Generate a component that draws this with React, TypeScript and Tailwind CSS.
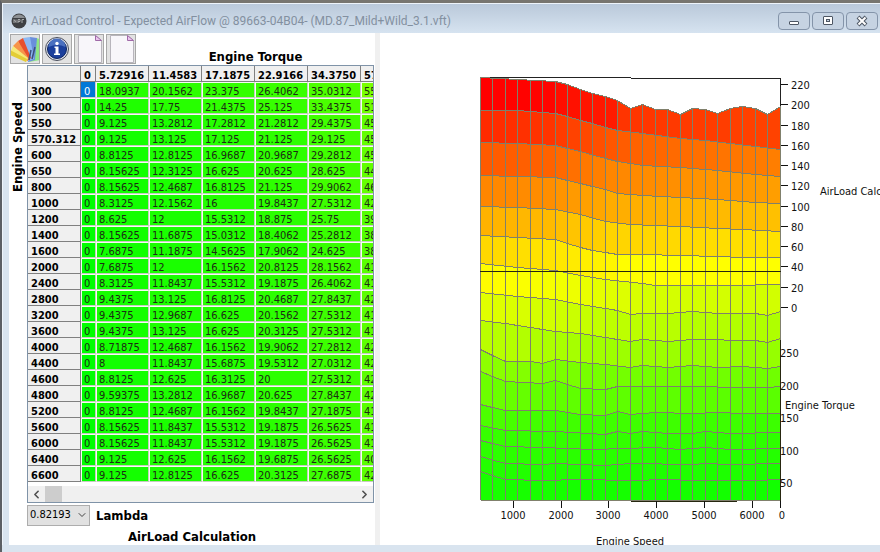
import { ChevronDown, ChevronLeft, ChevronRight } from "lucide-react";

const TORQUE = ["0", "5.72916", "11.4583", "17.1875", "22.9166", "34.3750", "57"];

const ROWS: string[][] = [
  ["300", "0", "18.0937", "20.1562", "23.375", "26.4062", "35.0312", "55"],
  ["500", "0", "14.25", "17.75", "21.4375", "25.125", "33.4375", "51"],
  ["550", "0", "9.125", "13.2812", "17.2812", "21.2812", "29.4375", "45"],
  ["570.312", "0", "9.125", "13.125", "17.125", "21.125", "29.125", "45"],
  ["600", "0", "8.8125", "12.8125", "16.9687", "20.9687", "29.2812", "45"],
  ["650", "0", "8.15625", "12.3125", "16.625", "20.625", "28.625", "44"],
  ["800", "0", "8.15625", "12.4687", "16.8125", "21.125", "29.9062", "46"],
  ["1000", "0", "8.3125", "12.1562", "16", "19.8437", "27.5312", "42"],
  ["1200", "0", "8.625", "12", "15.5312", "18.875", "25.75", "39"],
  ["1400", "0", "8.15625", "11.6875", "15.0312", "18.4062", "25.2812", "38"],
  ["1600", "0", "7.6875", "11.1875", "14.5625", "17.9062", "24.625", "38"],
  ["2000", "0", "7.6875", "12", "16.1562", "20.8125", "28.1562", "41"],
  ["2400", "0", "8.3125", "11.8437", "15.5312", "19.1875", "26.4062", "41"],
  ["2800", "0", "9.4375", "13.125", "16.8125", "20.4687", "27.8437", "42"],
  ["3200", "0", "9.4375", "12.9687", "16.625", "20.1562", "27.5312", "41"],
  ["3600", "0", "9.4375", "13.125", "16.625", "20.3125", "27.5312", "41"],
  ["4000", "0", "8.71875", "12.4687", "16.1562", "19.9062", "27.2812", "42"],
  ["4400", "0", "8", "11.8437", "15.6875", "19.5312", "27.0312", "42"],
  ["4600", "0", "8.8125", "12.625", "16.3125", "20", "27.5312", "42"],
  ["4800", "0", "9.59375", "13.2812", "16.9687", "20.625", "27.8437", "42"],
  ["5200", "0", "8.8125", "12.4687", "16.1562", "19.8437", "27.1875", "41"],
  ["5600", "0", "8.15625", "11.8437", "15.5312", "19.1875", "26.5625", "41"],
  ["6000", "0", "8.15625", "11.8437", "15.5312", "19.1875", "26.5625", "41"],
  ["6400", "0", "9.125", "12.625", "16.1562", "19.6875", "26.5625", "40"],
  ["6600", "0", "9.125", "12.8125", "16.625", "20.3125", "27.6875", "42"],
];

// 0 = red, 255 = yellow, 510 = green
const heat = (k: number) => {
  const v = Math.max(0, Math.min(510, Math.round(k)));
  return v <= 255 ? `rgb(255,${v},0)` : `rgb(${510 - v},255,0)`;
};

type Anchors = [number, number][];

// linear interpolation between [column, value] pairs
const at = (pts: Anchors, c: number) => {
  for (let i = 1; i < pts.length; i++) {
    const [c0, v0] = pts[i - 1];
    const [c1, v1] = pts[i];
    if (c <= c1) return v0 + ((v1 - v0) * (c - c0)) / (c1 - c0);
  }
  return pts[pts.length - 1][1];
};

const CONTOURS: Anchors[] = [
  [[0, 77], [3, 79], [6, 81], [7, 84], [8, 89], [9, 93], [10, 96], [11, 100], [12, 108], [13, 104], [14, 109], [15, 109], [16, 114], [17, 108], [18, 109], [19, 113], [20, 108], [21, 106], [22, 108], [23, 114], [24, 106]],
  [[0, 110], [3, 110], [6, 113], [7, 116], [8, 120], [9, 123], [10, 127], [11, 130], [13, 133], [16, 138], [18, 140], [20, 143], [24, 149]],
  [[0, 142], [3, 143], [6, 145], [7, 148], [8, 151], [10, 158], [11, 161], [13, 165], [16, 167], [19, 170], [22, 174], [24, 176]],
  [[0, 175], [6, 177], [8, 183], [10, 189], [11, 193], [13, 195], [16, 197], [19, 199], [22, 202], [24, 203]],
  [[0, 206], [3, 207], [6, 209], [8, 214], [10, 221], [12, 224], [16, 226], [19, 228], [21, 229], [24, 231]],
  [[0, 235], [3, 237], [6, 239], [8, 247], [9, 250], [11, 254], [13, 254], [16, 255], [19, 256], [21, 257], [24, 257]],
  [[0, 263], [3, 267], [6, 270], [8, 275], [10, 279], [13, 283], [14, 285], [20, 285], [24, 284]],
  [[0, 292], [3, 296], [6, 299], [8, 304], [11, 310], [12, 314], [13, 313], [15, 313], [17, 311], [19, 313], [22, 313], [23, 315], [24, 311]],
  [[0, 320], [2, 323], [6, 331], [8, 333], [11, 339], [12, 341], [13, 339], [15, 341], [17, 339], [19, 339], [20, 340], [22, 340], [23, 342], [24, 338]],
  [[0, 349], [2, 361], [4, 361], [5, 363], [6, 359], [8, 362], [10, 364], [12, 367], [13, 365], [15, 367], [17, 365], [19, 367], [21, 366], [23, 368], [24, 366]],
  [[0, 371], [2, 381], [5, 383], [6, 380], [8, 388], [10, 389], [11, 386], [13, 386], [18, 386], [20, 387], [23, 387], [24, 386]],
  [[0, 404], [2, 410], [6, 410], [8, 414], [10, 415], [11, 411], [12, 414], [14, 412], [17, 413], [19, 412], [21, 413], [24, 413]],
  [[0, 425], [2, 430], [6, 431], [10, 434], [11, 431], [12, 433], [13, 431], [15, 433], [17, 433], [18, 431], [20, 433], [24, 432]],
  [[0, 440], [2, 446], [5, 447], [9, 449], [14, 447], [16, 449], [18, 447], [20, 449], [24, 448]],
  [[0, 456], [2, 463], [5, 464], [6, 463], [10, 465], [12, 463], [14, 463], [15, 464], [17, 464], [18, 463], [20, 464], [24, 463]],
  [[0, 471], [2, 479], [5, 480], [8, 479], [12, 480], [15, 479], [17, 480], [22, 480], [24, 479]],
  [[0, 500], [24, 500]],
];

const BAND_HEAT: Anchors[] = [
  [[0, 0], [5, 4], [6, 14], [10, 26], [11, 52], [23, 66]],
  [[0, 42], [5, 52], [10, 86], [12, 98], [23, 126]],
  [[0, 90], [5, 98], [10, 134], [23, 158]],
  [[0, 134], [5, 142], [10, 172], [23, 192]],
  [[0, 178], [5, 186], [10, 212], [23, 226]],
  [[0, 216], [5, 228], [10, 246], [11, 254], [23, 256]],
  [[0, 252], [5, 264], [10, 285], [13, 297], [23, 300]],
  [[0, 285], [5, 300], [10, 320], [23, 335]],
  [[0, 324], [5, 338], [10, 352], [23, 360]],
  [[0, 368], [5, 386], [10, 394], [23, 398]],
  [[0, 402], [5, 414], [23, 420]],
  [[0, 434], [5, 446], [23, 450]],
  [[0, 456], [23, 464]],
  [[0, 466], [23, 474]],
  [[0, 476], [23, 482]],
  [[0, 486], [23, 492]],
];

const COLS = Array.from({ length: 24 }, (_, i) => i);
const px = (c: number) => Math.floor(480 + 12.5 * c) + 0.5;

const LOAD_TICKS = [220, 200, 180, 160, 140, 120, 100, 80, 60, 40, 20, 0];
const TORQUE_TICKS = [250, 200, 150, 100, 50];
const SPEED_TICKS = ["1000", "2000", "3000", "4000", "5000", "6000"];

function SurfaceChart() {
  return (
    <svg
      viewBox="380 33 500 512"
      width="500"
      height="512"
      className="block shrink-0 font-['DejaVu_Sans_Condensed','DejaVu_Sans',sans-serif] text-[11px]"
      role="img"
      aria-label="AirLoad surface"
    >
      <g shapeRendering="crispEdges">
        <path d="M480 77.5H631M631 78.5H780.5V501.5" fill="none" stroke="#222" />
        {BAND_HEAT.map((band, b) =>
          COLS.map((c) => {
            const top = CONTOURS[b];
            const low = CONTOURS[b + 1];
            return (
              <polygon
                key={`${b}-${c}`}
                points={`${px(c)},${at(top, c)} ${px(c + 1)},${at(top, c + 1)} ${px(c + 1)},${at(low, c + 1)} ${px(c)},${at(low, c)}`}
                fill={heat(at(band, c))}
              />
            );
          })
        )}
        <g fill="none" stroke="#80806c">
          {CONTOURS.map((line, i) => (
            <polyline key={i} points={[...COLS, 24].map((c) => `${px(c)},${at(line, c) + 0.5}`).join(" ")} />
          ))}
          {[...COLS, 24].map((c) => (
            <path key={c} d={`M${px(c)} ${at(CONTOURS[0], c)}V500`} />
          ))}
        </g>
        <path d="M480 271.5H781M780.5 340V501.5M631 501.5H737" stroke="#26260f" fill="none" />
        {LOAD_TICKS.map((t, i) => (
          <path key={t} d={`M781 ${Math.round(84 + i * 20.27) + 0.5}h7`} stroke="#111" />
        ))}
        {[...SPEED_TICKS, "0"].map((t, i) => (
          <path key={t} d={`M${i === 6 ? 780.5 : Math.round(513 + i * 47.7) + 0.5} 501v7`} stroke="#111" />
        ))}
      </g>
      <g fill="#111">
        {LOAD_TICKS.map((t, i) => (
          <text key={t} x="791" y={Math.round(89 + i * 20.27)}>{t}</text>
        ))}
        {TORQUE_TICKS.map((t, i) => (
          <text key={t} x="780" y={Math.round(357 + i * 32.5)}>{t}</text>
        ))}
        {SPEED_TICKS.map((t, i) => (
          <text key={t} x={Math.round(513 + i * 47.7)} y="519" textAnchor="middle">{t}</text>
        ))}
        <text x="782" y="519" textAnchor="middle">0</text>
        <text x="820" y="195">AirLoad Calculation</text>
        <text x="785" y="409">Engine Torque</text>
        <text x="630" y="545" textAnchor="middle">Engine Speed</text>
      </g>
    </svg>
  );
}

function SwatchIcon() {
  return (
    <svg viewBox="0 0 30 30" className="h-[30px] w-[30px] shrink-0">
      <path d="M19 28 26 4l4 1v21z" fill="#8ee684" />
      <path d="M18 28 20 3l7 1-2 22z" fill="#6a8fdc" />
      <path d="M18 27 13 4l7-1 4 22z" fill="#8db8f2" />
      <path d="M17 27 8 7l5-3 8 20z" fill="#e8502e" />
      <path d="M17 27 3 12l5-5 11 18z" fill="#f7944a" />
      <path d="M16 28 1 17l2-5 15 12z" fill="#f6ea78" />
      <path d="M16 28 0 21v-5l17 9z" fill="#e3cd35" />
      <path d="M19 26 21 16M22 25 25 13" stroke="#3d4f7c" strokeWidth="1.5" />
    </svg>
  );
}

function InfoIcon() {
  return (
    <svg viewBox="0 0 30 30" className="h-[30px] w-[30px] shrink-0">
      <circle cx="15" cy="15" r="11.5" fill="#dde1ea" stroke="#4a4f5c" />
      <circle cx="15" cy="15" r="9.500" fill="#1b3f9c" stroke="#0b2360" />
      <path d="M6.500 13a8.500 8.500 0 0 1 17 0q-8-4-17 0z" fill="#4a70c0" />
      <circle cx="15" cy="9.500" r="1.700" fill="#fff" />
      <path d="M12.500 12.500h4v7h1.500v1.500h-6v-1.500h1.500v-5.500h-1z" fill="#fff" />
    </svg>
  );
}

function PageIcon() {
  return (
    <svg viewBox="0 0 30 30" className="h-[30px] w-[30px] shrink-0">
      <path d="M4.500 1.500h17l6 5v22h-23z" fill="#f8f6fa" stroke="#b8b5bc" />
      <path d="M21.500 1.500v5h6z" fill="#ecc6ee" stroke="#a06aa8" />
    </svg>
  );
}

function ToolButton({ label, children }: { label: string; children: React.ReactNode }) {
  return (
    <button
      type="button"
      aria-label={label}
      className="flex h-[30px] w-[30px] items-center justify-center overflow-hidden border border-[#a8a8a8] bg-[#e2e2e2]"
    >
      {children}
    </button>
  );
}

function WindowButton({ label, children }: { label: string; children: React.ReactNode }) {
  return (
    <button
      type="button"
      aria-label={label}
      className="flex h-[18px] w-8 items-center justify-center rounded-sm border border-[#8494a9] bg-[#c6d3e2]"
    >
      <svg viewBox="0 0 14 12" className="h-3 w-3.5">{children}</svg>
    </button>
  );
}

function TitleBar() {
  return (
    <header className="flex h-[29px] items-center bg-linear-to-b from-[#bac9da] to-[#d6e3f0] pt-1 pr-0.5 pl-2">
      <svg viewBox="0 0 16 16" className="h-4 w-4 shrink-0">
        <circle cx="8" cy="8" r="7.500" fill="#3e4043" />
        <path d="M2 5a7 7 0 0 1 12 0z" fill="#8d9093" />
        <path d="M3 10V6.500l2 3v-3M7 10V6.500h2v2H7M11 10V6.500h2" stroke="#a8aaac" fill="none" />
      </svg>
      <h1 className="min-w-0 flex-1 truncate pl-1 font-[Roboto,'Noto_Sans',sans-serif] text-xs text-[#8390a0]">
        AirLoad Control - Expected AirFlow @ 89663-04B04- (MD.87_Mild+Wild_3.1.vft)
      </h1>
      <div className="flex gap-0.5">
        <WindowButton label="Minimize">
          <rect x="2.500" y="6.500" width="9" height="3" rx="0.500" fill="#fff" stroke="#4d5663" />
        </WindowButton>
        <WindowButton label="Restore">
          <rect x="2.500" y="1.500" width="9" height="8" rx="0.500" fill="#fff" stroke="#4d5663" />
          <rect x="5.500" y="4.500" width="3" height="2" fill="#c6d3e2" stroke="#4d5663" />
        </WindowButton>
        <WindowButton label="Close">
          <path d="m3 2 8 8m0-8-8 8" stroke="#4d5663" strokeWidth="4" />
          <path d="m3.500 2.500 7 7m0-7-7 7" stroke="#fff" strokeWidth="2" />
        </WindowButton>
      </div>
    </header>
  );
}

function LoadTable() {
  return (
    <table className="w-[386px] table-fixed border-separate border-spacing-0 text-[11px] leading-[10px]">
      <colgroup>
        <col className="w-[53px]" />
        <col className="w-[15px]" />
        {TORQUE.slice(1).map((t) => (
          <col key={t} className="w-[53px]" />
        ))}
      </colgroup>
      <thead>
        <tr className="h-4 bg-[#f0f0f0] text-left">
          <td className="border-r border-b border-[#808080] p-0" />
          {TORQUE.map((t) => (
            <th key={t} scope="col" className="border-r border-b border-[#808080] p-0 pt-[5px] pl-[3px] font-bold">
              {t}
            </th>
          ))}
        </tr>
      </thead>
      <tbody>
        {ROWS.map(([speed, ...cells], r) => (
          <tr key={speed} className="h-4">
            <th scope="row" className="border-r border-b border-[#808080] bg-[#f0f0f0] p-0 pt-[5px] pl-[3px] text-left font-bold">
              {speed}
            </th>
            {cells.map((value, c) =>
              r === 0 && c === 0 ? (
                <td key={c} className="border-r border-b border-[#d0d0d0] bg-[#0078d7] p-0 pt-[5px] pl-[3px] text-white">
                  {value}
                </td>
              ) : (
                <td
                  key={c}
                  className="border border-t-[#f4fff0] border-r-[#c6ccc0] border-b-[#c6ccc0] border-l-[#f4fff0] p-0 pt-1 pl-0.5 text-[#1c2c14]"
                  style={{ backgroundColor: heat(510 - Number(value) * 2.2) }}
                >
                  {value}
                </td>
              )
            )}
          </tr>
        ))}
      </tbody>
    </table>
  );
}

function TablePanel() {
  return (
    <section className="w-[366px] shrink-0 bg-white pt-px">
      <div className="flex items-end">
        <div className="flex gap-0.5 pl-px">
          <ToolButton label="Colors"><SwatchIcon /></ToolButton>
          <ToolButton label="Info"><InfoIcon /></ToolButton>
          <ToolButton label="Copy page"><PageIcon /></ToolButton>
          <ToolButton label="New page"><PageIcon /></ToolButton>
        </div>
        <h2 className="flex-1 text-center text-[13px] leading-[14px] font-bold">Engine Torque</h2>
      </div>
      <div className="flex pt-px pr-px">
        <div className="flex w-[18px] shrink-0 justify-center pt-[37px]">
          <h2 className="rotate-180 self-start text-[13px] leading-[14px] font-bold [writing-mode:vertical-rl]">Engine Speed</h2>
        </div>
        <div className="min-w-0 flex-1 overflow-hidden border border-[#7f93a8]">
          <LoadTable />
          <div className="mt-1 flex h-4 items-center bg-[#f0f0f0]">
            <button type="button" aria-label="Scroll left" className="flex w-[17px] justify-center text-[#505050]">
              <ChevronLeft size={13} strokeWidth={3} />
            </button>
            <div className="h-4 w-[17px] bg-[#cdcdcd]" />
            <button type="button" aria-label="Scroll right" className="ml-auto flex w-[17px] justify-center text-[#505050]">
              <ChevronRight size={13} strokeWidth={3} />
            </button>
          </div>
        </div>
      </div>
      <div className="flex items-center gap-1.5 pt-0.5 pl-[18px]">
        <div className="relative">
          <select
            id="lambda"
            defaultValue="0.82193"
            className="block h-[21px] w-[63px] appearance-none border border-[#adadad] bg-[#e1e1e1] pl-0.5 text-[11px]"
          >
            <option>0.82193</option>
          </select>
          <ChevronDown size={12} className="pointer-events-none absolute top-1 right-0.5 text-[#444]" />
        </div>
        <label htmlFor="lambda" className="text-[13px] leading-[14px] font-bold">Lambda</label>
      </div>
      <h2 className="pt-1 text-center text-[13px] leading-[14px] font-bold">AirLoad Calculation</h2>
    </section>
  );
}

export default function App() {
  return (
    <div className="flex min-h-screen flex-col border-t-3 border-l-2 border-t-[#77756f] border-l-[#5c5f64] bg-[#d9e4ef] font-['DejaVu_Sans_Condensed','DejaVu_Sans',sans-serif] text-black">
      <div className="border-t border-l border-[#eef4fa]">
        <TitleBar />
        <main className="ml-1.5 flex">
          <TablePanel />
          <div className="w-[5px] shrink-0 bg-[#f0f0f0]" />
          <section className="min-w-0 flex-1 overflow-hidden bg-white">
            <SurfaceChart />
          </section>
        </main>
      </div>
    </div>
  );
}
